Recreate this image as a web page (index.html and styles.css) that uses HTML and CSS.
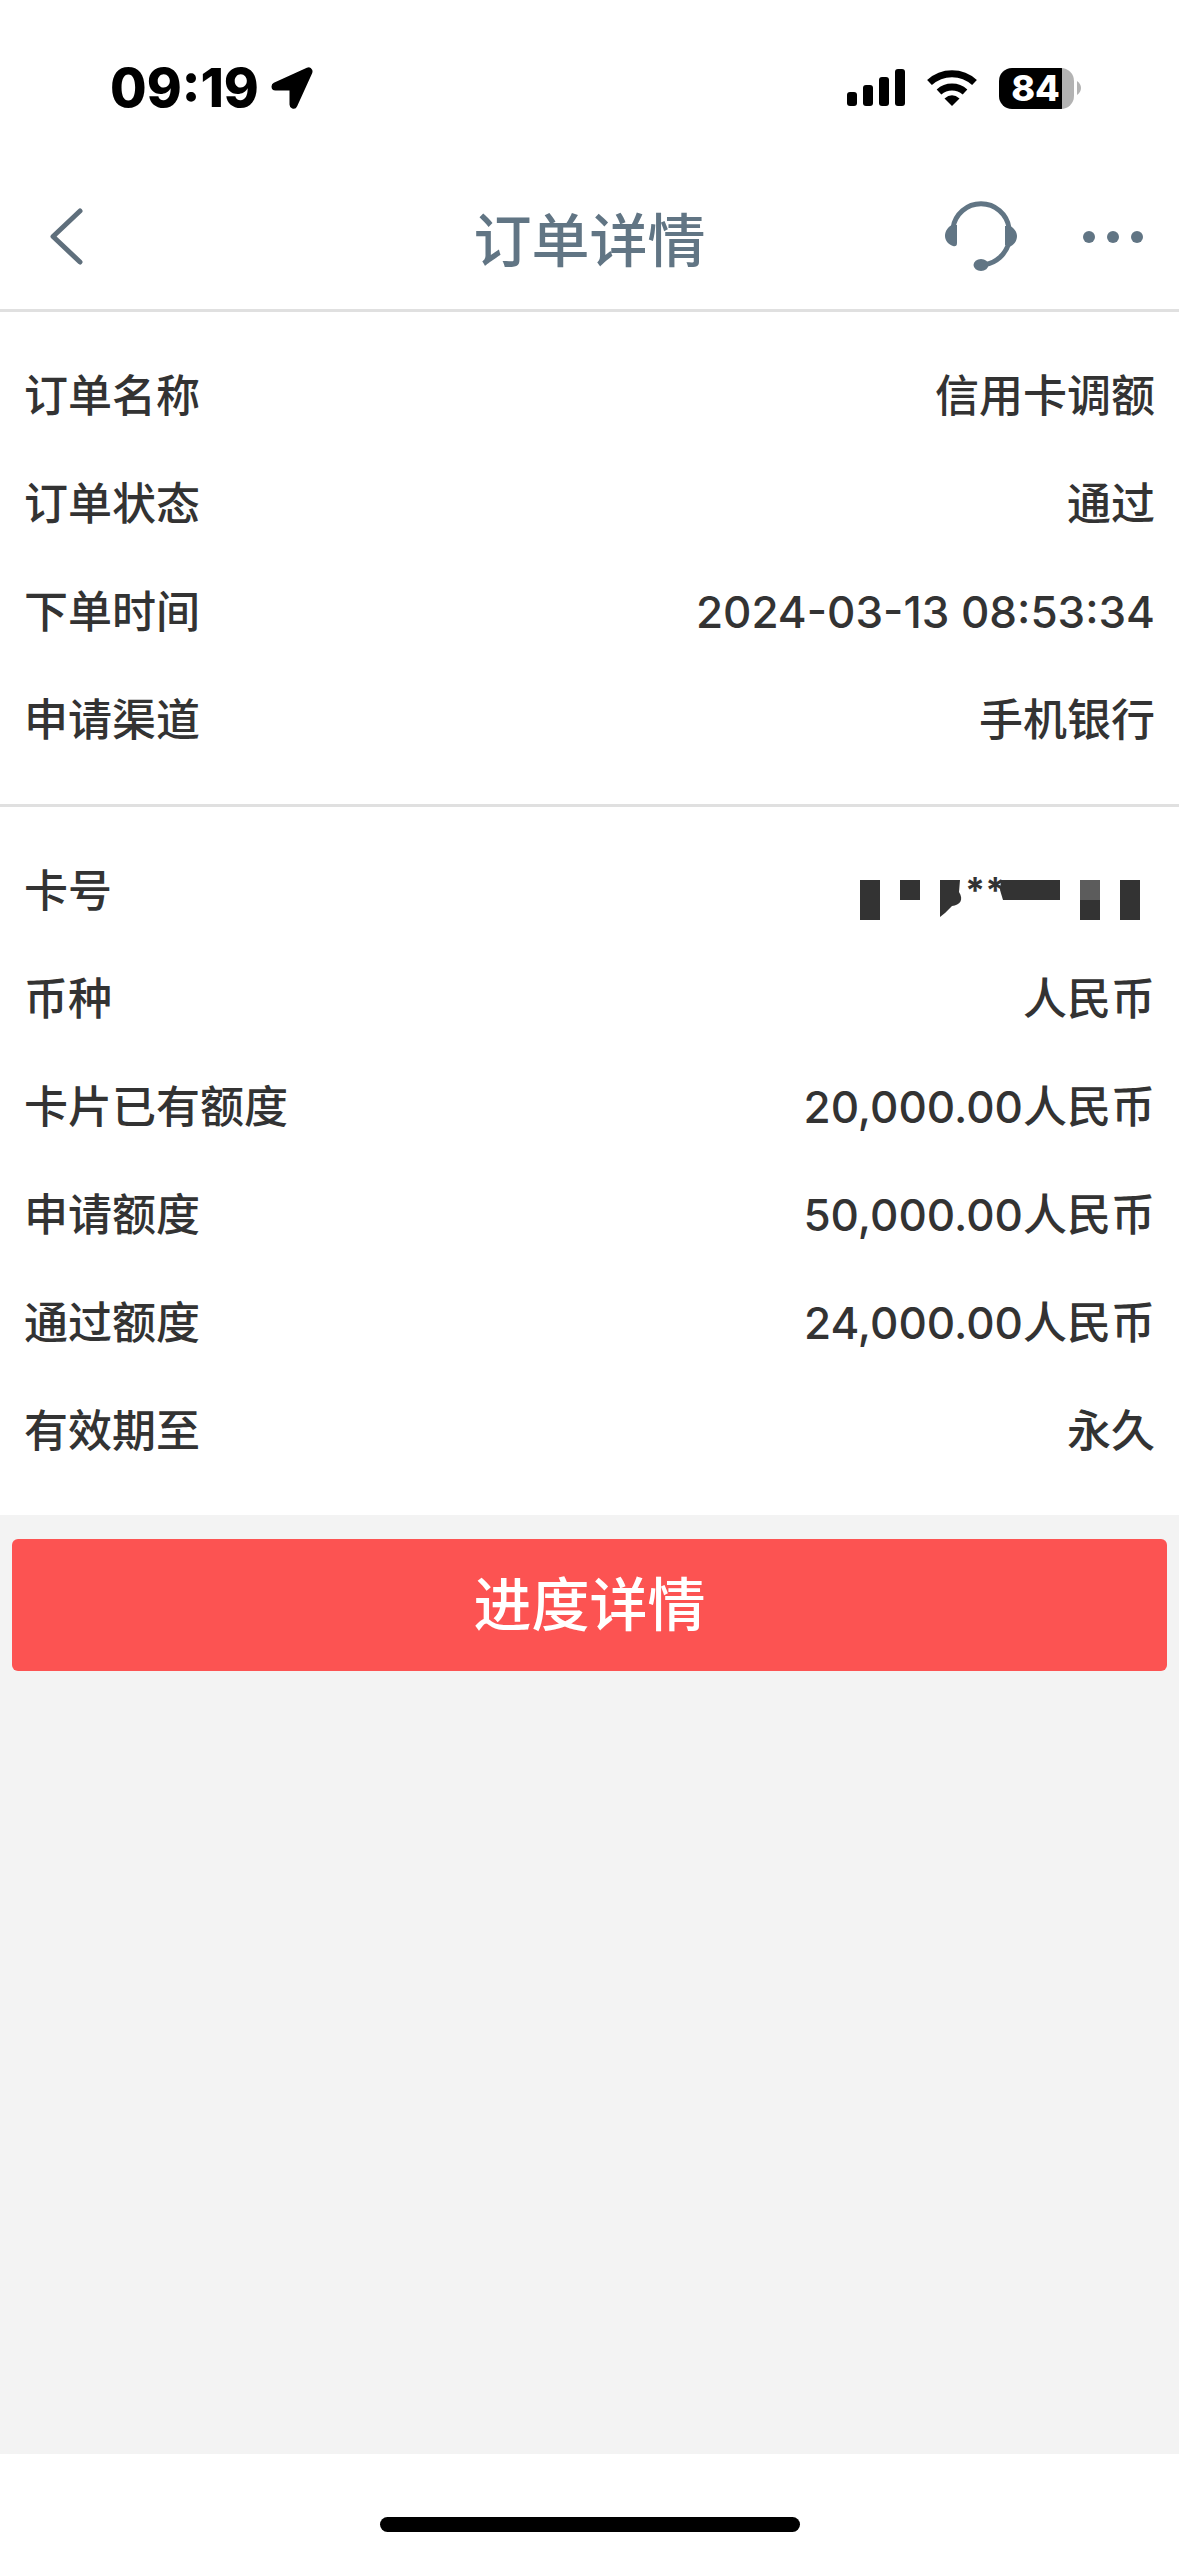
FILE: index.html
```html
<!DOCTYPE html>
<html lang="zh-CN">
<head>
    <meta charset="UTF-8">
    <meta name="viewport" content="width=device-width, initial-scale=1.0">
    <title>订单详情</title>
    <link rel="stylesheet" href="styles.css">
</head>
<body>
    <div class="page">
        <!-- Status bar -->
        <div class="status-bar">
            <div class="status-left">
                <span class="time">09:19</span>
                <svg class="location" width="42" height="42" viewBox="0 0 42 42">
                    <path d="M4.500 19.500 L37.500 4.500 L22.500 37.500 V19.500 Z" fill="#000" stroke="#000" stroke-width="8" stroke-linejoin="round"/>
                </svg>
            </div>
            <div class="status-right">
                <svg width="58" height="38" viewBox="0 0 58 38">
                    <rect x="0" y="23" width="10" height="14" rx="3"/>
                    <rect x="16" y="16" width="10" height="21" rx="3"/>
                    <rect x="32" y="8" width="10" height="29" rx="3"/>
                    <rect x="48" y="0" width="10" height="37" rx="3"/>
                </svg>
                <svg width="50" height="38" viewBox="0 0 50 38">
                    <path d="M25 37 L17.500 29.500 Q25 23 32.500 29.500 Z"/>
                    <path d="M12 23 A19.500 19.500 0 0 1 38 23" fill="none" stroke="#000" stroke-width="7"/>
                    <path d="M2.500 13.500 A33 33 0 0 1 47.500 13.500" fill="none" stroke="#000" stroke-width="7"/>
                </svg>
                <div class="battery">
                    <div class="battery-body"><span>84</span></div>
                    <svg width="4" height="14" viewBox="0 0 4 14"><path d="M0 0 Q4 3 4 7 Q4 11 0 14 Z" fill="#b3b3b3"/></svg>
                </div>
            </div>
        </div>

        <!-- Title bar -->
        <header class="nav-bar">
            <button class="icon-btn back" aria-label="返回">
                <svg width="34" height="58" viewBox="0 0 34 58">
                    <path d="M30 3 L3 28.500 L30 54" fill="none" stroke="#5f6f7c" stroke-width="5" stroke-linecap="round" stroke-linejoin="round"/>
                </svg>
            </button>
            <h1>订单详情</h1>
            <div class="nav-actions">
                <button class="icon-btn" aria-label="客服">
                    <svg width="72" height="72" viewBox="0 0 72 72">
                        <path d="M8 27 A28.300 28.300 0 0 1 64 27 M64 42 C60 54 51 62 40 63.500" fill="none" stroke="#617584" stroke-width="5"/>
                        <path d="M12 24 V42 Q12 46 8 45 C3 43.500 0 39 0 35 C0 30 3 26 7 24 Z M60 25 H65 C69 27 72 31 72 35 C72 40 69 44 64 46 L60 44 Z" fill="#617584"/>
                        <ellipse cx="36" cy="64" rx="7.500" ry="6" fill="#617584"/>
                    </svg>
                </button>
                <button class="icon-btn" aria-label="更多">
                    <svg width="60" height="12" viewBox="0 0 60 12" fill="#617584">
                        <circle cx="6" cy="6" r="6"/>
                        <circle cx="30" cy="6" r="6"/>
                        <circle cx="54" cy="6" r="6"/>
                    </svg>
                </button>
            </div>
        </header>

        <!-- Order info -->
        <main>
            <dl class="section">
                <div class="row"><dt>订单名称</dt><dd>信用卡调额</dd></div>
                <div class="row"><dt>订单状态</dt><dd>通过</dd></div>
                <div class="row"><dt>下单时间</dt><dd>2024-03-13 08:53:34</dd></div>
                <div class="row"><dt>申请渠道</dt><dd>手机银行</dd></div>
            </dl>
            <dl class="section">
                <div class="row">
                    <dt>卡号</dt>
                    <dd class="card-number">
                        <svg width="280" height="58" viewBox="0 -10 280 58" fill="#333">
                            <path d="M0 8 H20 V48 H0 Z M40 8 H60 V28 H40 Z M220 28 H240 V48 H220 Z M260 8 H280 V48 H260 Z"/>
                            <path d="M80 8 H100 L99 20 C104 28 100 33 92 34 L85 41 L80 45 Z"/>
                            <path d="M141 8 H200 V28 H143 L140 18 Z"/>
                            <rect x="220" y="8" width="20" height="20" fill="#5c5c5c"/>
                            <text x="105" y="31">**</text>
                        </svg>
                    </dd>
                </div>
                <div class="row"><dt>币种</dt><dd>人民币</dd></div>
                <div class="row"><dt>卡片已有额度</dt><dd>20,000.00人民币</dd></div>
                <div class="row"><dt>申请额度</dt><dd>50,000.00人民币</dd></div>
                <div class="row"><dt>通过额度</dt><dd>24,000.00人民币</dd></div>
                <div class="row"><dt>有效期至</dt><dd>永久</dd></div>
            </dl>
            <div class="actions">
                <button class="progress-btn">进度详情</button>
            </div>
        </main>

        <div class="home-area">
            <div class="home-indicator"></div>
        </div>
    </div>
</body>
</html>
```

FILE: styles.css
```css
* {
    box-sizing: border-box;
}

body {
    margin: 0;
    font-family: Inter, 'Noto Sans CJK SC', sans-serif;
    color: #333;
    background-color: #f3f3f3;
}

svg {
    display: block;
}

.page {
    display: flex;
    flex-direction: column;
    min-height: 100vh;
}

/* Status bar */
.status-bar {
    display: flex;
    justify-content: space-between;
    align-items: center;
    height: 176px;
    padding: 0 98px 0 110px;
    background-color: #fff;
    color: #000;
}

.status-left,
.status-right {
    display: flex;
    align-items: center;
}

.status-left {
    gap: 12px;
}

.status-right {
    gap: 22px;
}

.time {
    font-size: 53px;
    font-weight: 800;
}

.battery {
    display: flex;
    align-items: center;
    gap: 3px;
}

.battery-body {
    width: 75px;
    height: 41px;
    padding-right: 2px;
    border-radius: 13px;
    background: linear-gradient(to right, #000 63px, #b3b3b3 63px);
    color: #fff;
    font-size: 36px;
    font-weight: 800;
    line-height: 41px;
    text-align: center;
}

/* Title bar */
.nav-bar {
    display: grid;
    grid-template-columns: 1fr auto 1fr;
    align-items: center;
    height: 136px;
    padding: 0 36px 12px;
    border-bottom: 3px solid #e0e0e0;
    background-color: #fff;
}

.nav-bar h1 {
    margin: 0;
    padding-top: 8px;
    color: #617584;
    font-size: 58px;
    font-weight: 500;
    line-height: 72px;
}

.icon-btn {
    padding: 0;
    border: none;
    background: none;
    cursor: pointer;
}

.back {
    justify-self: start;
    margin-left: 14px;
}

.nav-actions {
    display: flex;
    justify-content: flex-end;
    align-items: center;
    gap: 66px;
}

/* Order info */
main {
    flex: 1;
}

.section {
    margin: 0;
    padding: 30px 24px;
    background-color: #fff;
}

.section + .section {
    border-top: 3px solid #e0e0e0;
}

.row {
    display: flex;
    justify-content: space-between;
    align-items: center;
    height: 108px;
    font-size: 44px;
    font-weight: 500;
    line-height: 60px;
}

.row dd {
    margin: 0;
}

.row .card-number {
    padding-right: 15px;
}

.card-number text {
    font-size: 36px;
    font-weight: 700;
}

.actions {
    padding: 24px 12px;
}

.progress-btn {
    width: 100%;
    height: 132px;
    border: none;
    border-radius: 6px;
    background-color: #fc5352;
    color: #fff;
    font-family: inherit;
    font-size: 58px;
    font-weight: 500;
    line-height: 72px;
    cursor: pointer;
}

/* Home indicator */
.home-area {
    display: flex;
    justify-content: center;
    align-items: flex-end;
    height: 102px;
    padding-bottom: 24px;
    background-color: #fff;
}

.home-indicator {
    width: 420px;
    height: 15px;
    border-radius: 8px;
    background-color: #000;
}
```
